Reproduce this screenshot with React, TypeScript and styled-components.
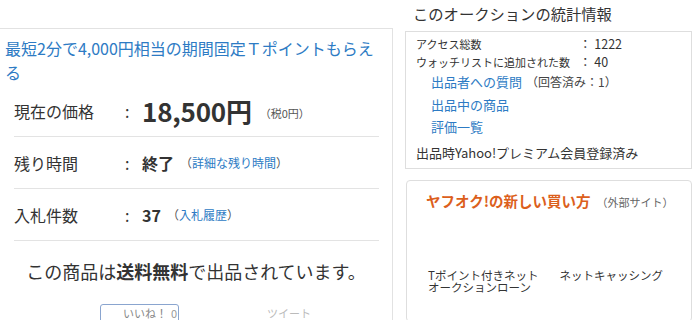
import React from "react";
import styled, { createGlobalStyle } from "styled-components";

const GlobalStyle = createGlobalStyle`
  html, body {
    margin: 0;
    padding: 0;
    background: #ffffff;
  }
  body {
    font-family: "Noto Sans CJK JP", "Noto Sans", sans-serif;
    color: #333333;
    overflow: hidden;
  }
`;

const App = () => {
  const rows = [
    { label: "残り時間", value: "終了", note: "詳細な残り時間" },
    { label: "入札件数", value: "37", note: "入札履歴" },
  ];
  const links = ["出品中の商品", "評価一覧"];
  const services = [
    { text: "Tポイント付きネット\nオークションローン" },
    { text: "ネットキャッシング" },
  ];

  return (
    <Page>
      <GlobalStyle />
      <LeftColumn>
        <Panel>
          <Promo href="#">最短2分で4,000円相当の期間固定Ｔポイントもらえる</Promo>
          <Rows>
            <Row>
              <Label>現在の価格</Label>
              <Colon>:</Colon>
              <Price>18,500円</Price>
              <Tax>（税0円）</Tax>
            </Row>
            {rows.map((r, idx) => (
              <Row key={idx}>
                <Label>{r.label}</Label>
                <Colon>:</Colon>
                <Value>{r.value}</Value>
                <Note>
                  （<NoteLink href="#">{r.note}</NoteLink>）
                </Note>
              </Row>
            ))}
          </Rows>
          <Shipping>
            この商品は<b>送料無料</b>で出品されています。
          </Shipping>
          <SocialBar>
            <LikeBtn>
              いいね！<LikeCount>0</LikeCount>
            </LikeBtn>
            <Tweet>ツイート</Tweet>
          </SocialBar>
        </Panel>
      </LeftColumn>
      <RightColumn>
        <SideTitle>このオークションの統計情報</SideTitle>
        <StatsBox>
          <StatRow>
            <StatLabel>アクセス総数</StatLabel>
            <StatValue>：&nbsp;1222</StatValue>
          </StatRow>
          <StatRow>
            <StatLabel>ウォッチリストに追加された数</StatLabel>
            <StatValue>：&nbsp;40</StatValue>
          </StatRow>
          <StatLinks>
            <StatLink href="#">出品者への質問</StatLink>
            <Answered>（回答済み：1）</Answered>
          </StatLinks>
          {links.map((l, idx) => (
            <StatLinks key={idx}>
              <StatLink href="#">{l}</StatLink>
            </StatLinks>
          ))}
          <Premium>出品時Yahoo!プレミアム会員登録済み</Premium>
        </StatsBox>
        <NewWayBox>
          <NewWayHead>
            <NewWayTitle>ヤフオク!の新しい買い方</NewWayTitle>
            <External>（外部サイト）</External>
          </NewWayHead>
          <Services>
            {services.map((s, idx) => (
              <Service key={idx}>
                <ServiceImage />
                <ServiceText>{s.text}</ServiceText>
              </Service>
            ))}
          </Services>
        </NewWayBox>
      </RightColumn>
    </Page>
  );
};

const Page = styled.div`
  width: 700px;
  height: 320px;
  display: flex;
  flex-direction: row;
  align-items: flex-start;
`;

const LeftColumn = styled.div`
  width: 393px;
  padding-top: 28px;
  flex-shrink: 0;
`;

const Panel = styled.div`
  border-top: 1px solid #e2e2e2;
  border-right: 1px solid #e2e2e2;
  padding-top: 7px;
`;

const Promo = styled.a`
  display: block;
  padding: 0 8px 0 5px;
  font-size: 16px;
  line-height: 24px;
  color: #2d7bc4;
  text-decoration: none;
`;

const Rows = styled.div`
  margin: 1px 13px 0 14px;
  display: flex;
  flex-direction: column;
`;

const Row = styled.div`
  height: 51px;
  border-bottom: 1px solid #e3e3e3;
  display: flex;
  align-items: center;
`;

const Label = styled.span`
  width: 111px;
  font-size: 16px;
  color: #333;
`;

const Colon = styled.span`
  width: 17px;
  font-size: 16px;
  color: #333;
`;

const Price = styled.span`
  font-size: 26px;
  font-weight: bold;
  color: #333;
  letter-spacing: -0.2px;
`;

const Tax = styled.span`
  margin-left: 8px;
  font-size: 11px;
  color: #555;
  padding-top: 4px;
`;

const Value = styled.span`
  font-size: 16px;
  font-weight: bold;
  color: #333;
`;

const Note = styled.span`
  margin-left: 6px;
  font-size: 12px;
  color: #555;
`;

const NoteLink = styled.a`
  color: #2d7bc4;
  text-decoration: none;
`;

const Shipping = styled.p`
  margin: 18px 0 0;
  text-align: center;
  font-size: 18px;
  line-height: 24px;
  color: #333;
  b {
    font-weight: bold;
  }
`;

const SocialBar = styled.div`
  margin-top: 21px;
  display: flex;
  align-items: flex-start;
  padding-left: 100px;
  gap: 88px;
`;

const LikeBtn = styled.div`
  width: 55px;
  height: 22px;
  padding-left: 22px;
  border: 1px solid #8aa5cf;
  border-radius: 3px;
  font-size: 11px;
  line-height: 16px;
  color: #888;
`;

const LikeCount = styled.span`
  margin-left: 4px;
  color: #999;
`;

const Tweet = styled.span`
  font-size: 11px;
  line-height: 18px;
  color: #bbb;
`;

const RightColumn = styled.div`
  width: 287px;
  margin-left: 12px;
  display: flex;
  flex-direction: column;
`;

const SideTitle = styled.div`
  padding-left: 8px;
  font-size: 15.3px;
  line-height: 26px;
  height: 31px;
  color: #333;
`;

const StatsBox = styled.div`
  border: 1px solid #dedede;
  padding: 3px 10px 5px 10px;
`;

const StatRow = styled.div`
  display: flex;
  align-items: baseline;
  font-size: 11px;
  line-height: 18px;
  color: #333;
`;

const StatLabel = styled.span`
  width: 163px;
`;

const StatValue = styled.span`
  font-size: 12.5px;
`;

const StatLinks = styled.div`
  padding-left: 15px;
  line-height: 22.5px;
  font-size: 13px;
`;

const StatLink = styled.a`
  color: #2d7bc4;
  text-decoration: none;
`;

const Answered = styled.span`
  margin-left: 4px;
  font-size: 12px;
  color: #444;
`;

const Premium = styled.div`
  margin-top: 4px;
  font-size: 13px;
  line-height: 20px;
  color: #333;
`;

const NewWayBox = styled.div`
  margin-top: 11px;
  margin-left: 1px;
  height: 131px;
  border: 1px solid #dedede;
  border-radius: 4px;
  padding: 9px 0 0 19px;
`;

const NewWayHead = styled.div`
  display: flex;
  align-items: baseline;
`;

const NewWayTitle = styled.span`
  font-size: 14.5px;
  font-weight: bold;
  color: #dc5f1c;
  line-height: 22px;
`;

const External = styled.span`
  margin-left: 6px;
  font-size: 11px;
  color: #666;
`;

const Services = styled.div`
  display: flex;
  gap: 0;
  margin-left: 2px;
`;

const Service = styled.div`
  width: 135px;
  display: flex;
  flex-direction: column;
`;

const ServiceImage = styled.div`
  height: 57px;
`;

const ServiceText = styled.div`
  font-size: 11.5px;
  line-height: 12px;
  color: #333;
  white-space: pre-line;
`;

export default App;
